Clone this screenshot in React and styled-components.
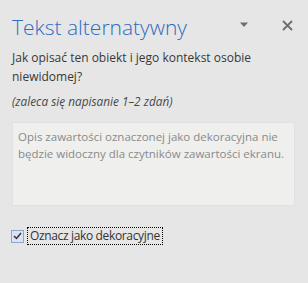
import styled, { createGlobalStyle } from "styled-components";

const Global = createGlobalStyle`
  html, body {
    margin: 0;
    padding: 0;
    background: #e6e6e6;
  }
  body {
    font-family: "Open Sans", "Noto Sans", sans-serif;
    color: #3b3b3b;
  }
`;

const Pane = styled.div`
  width: 308px;
  height: 283px;
  box-sizing: border-box;
  padding: 8px 13px 0 12px;
  background: #e6e6e6;
`;

const Header = styled.div`
  display: flex;
  align-items: center;
  height: 34px;
`;

const Title = styled.h1`
  flex: 1;
  margin: 0;
  padding-top: 3px;
  font-family: "Open Sans", "Noto Sans", sans-serif;
  font-weight: 300;
  font-size: 21px;
  color: #2f6bc0;
`;

const IconButton = styled.button`
  display: flex;
  align-items: center;
  justify-content: center;
  width: 16px;
  height: 16px;
  padding: 0;
  border: none;
  background: none;
  margin-left: ${(p) => p.gap || 0}px;
`;

const Question = styled.p`
  margin: 6px 0 0;
  font-size: 12px;
  line-height: 19px;
  color: #383838;
`;

const Hint = styled.p`
  margin: 7px 0 0;
  font-size: 11.8px;
  font-style: italic;
  color: #4a4a4a;
`;

const TextBox = styled.div`
  margin-top: 13px;
  height: 84px;
  box-sizing: border-box;
  padding: 5px 5px;
  background: #efefee;
  border: 1px solid #e1e1e1;
  font-size: 11.5px;
  line-height: 17px;
  color: #8a8a8a;
`;

const CheckRow = styled.label`
  display: flex;
  align-items: center;
  margin-top: 21px;
  margin-left: -1px;
  gap: 3px;
`;

const Box = styled.span`
  display: flex;
  align-items: center;
  justify-content: center;
  width: 11px;
  height: 11px;
  border: 1px solid #8ea6cf;
  background: #d9e3f2;
`;

const CheckLabel = styled.span`
  padding: 0 3px;
  outline: 1px dotted #000;
  outline-offset: -1px;
  font-size: 12px;
  letter-spacing: -0.35px;
  line-height: 18px;
  color: #333;
`;

export default function App() {
  return (
    <Pane>
      <Global />
      <Header>
        <Title>Tekst alternatywny</Title>
        <IconButton>
          <svg width="10" height="6" viewBox="0 0 10 6">
            <path d="M1 0.5 H9 L5 5 Z" fill="#6e6e6e" />
          </svg>
        </IconButton>
        <IconButton gap={27}>
          <svg width="11" height="11" viewBox="0 0 11 11">
            <path d="M1 1 L10 10 M10 1 L1 10" stroke="#6e6e6e" strokeWidth="1.8" />
          </svg>
        </IconButton>
      </Header>
      <Question>Jak opisać ten obiekt i jego kontekst osobie niewidomej?</Question>
      <Hint>(zaleca się napisanie 1–2 zdań)</Hint>
      <TextBox>
        Opis zawartości oznaczonej jako dekoracyjna nie będzie widoczny dla czytników zawartości ekranu.
      </TextBox>
      <CheckRow>
        <Box>
          <svg width="9" height="8" viewBox="0 0 9 8">
            <path d="M1 4 L3.5 6.5 L8 1" stroke="#333" strokeWidth="1.5" fill="none" />
          </svg>
        </Box>
        <CheckLabel>Oznacz jako dekoracyjne</CheckLabel>
      </CheckRow>
    </Pane>
  );
}
